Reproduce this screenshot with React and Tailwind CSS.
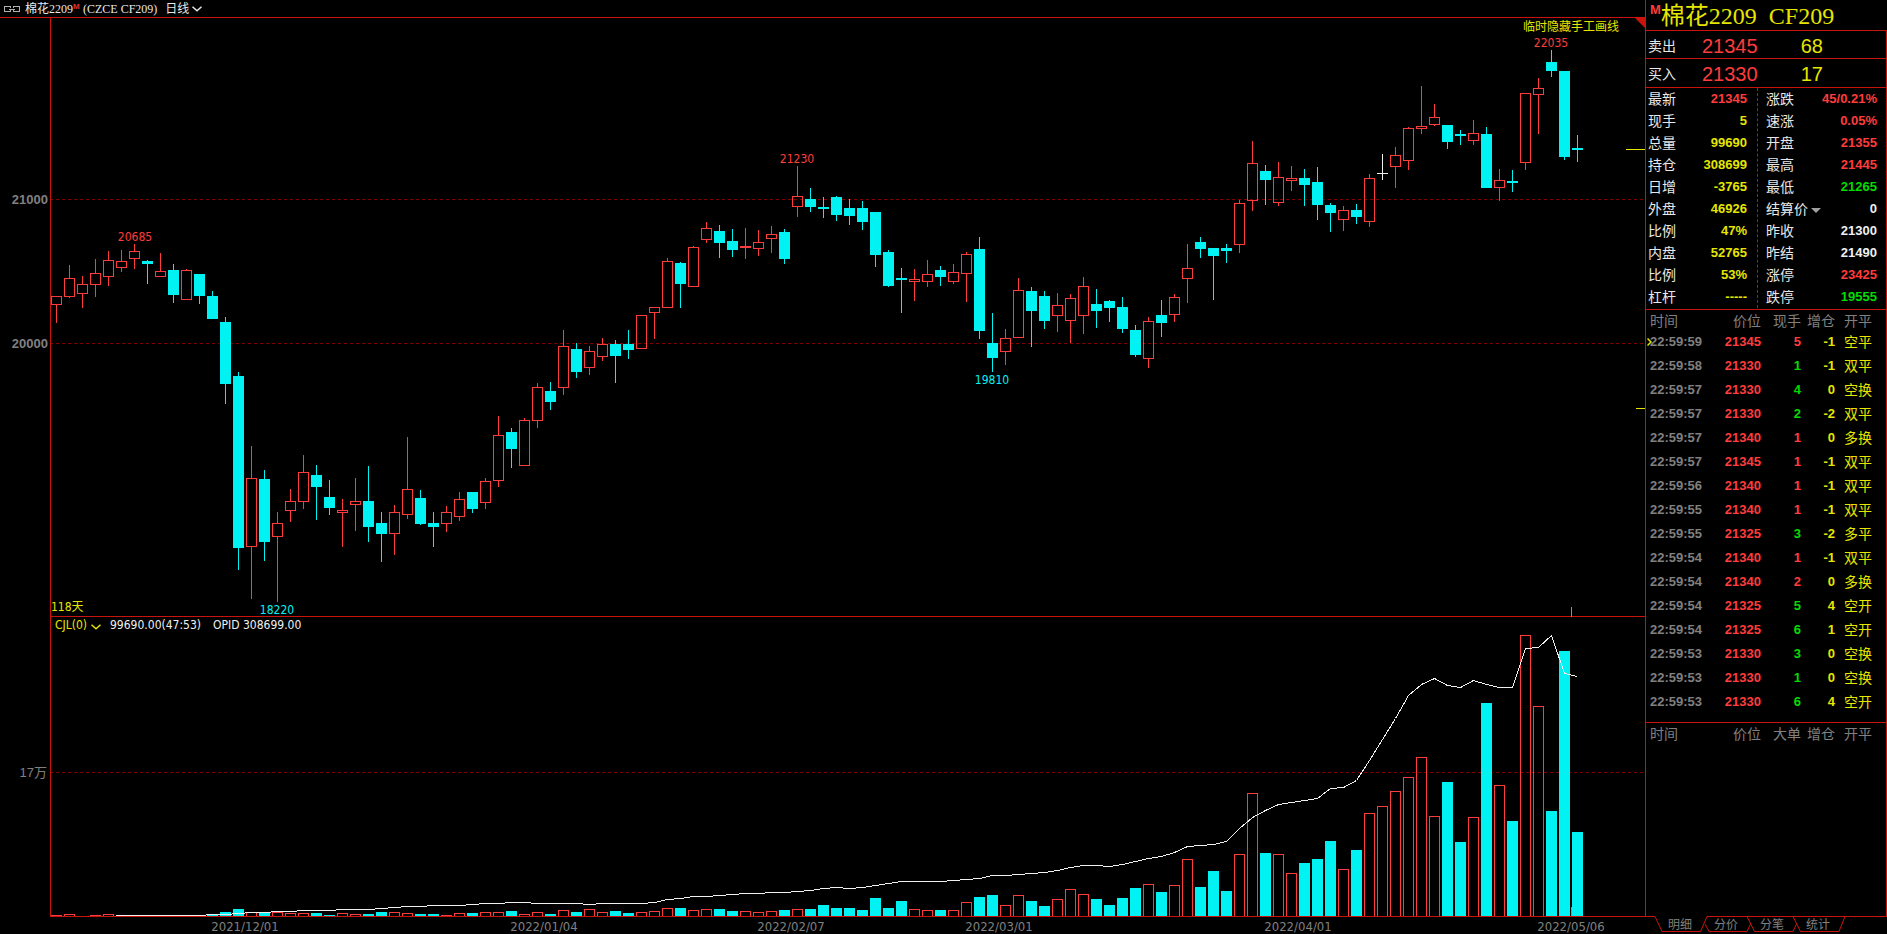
import React from 'react';

// Candles: [kind, high, bodyTop, bodyBottom, low, volumeTop, openInterest] in chart units.
// kind: r = rising (hollow red), c = falling (solid cyan), w = unchanged (white).
const CANDLES = [
  ['r', 296, 296, 305, 323, 915, null],
  ['r', 265, 278, 297, 298, 914, null],
  ['r', 276, 284, 294, 308, 916, null],
  ['r', 259, 273, 285, 297, 915, null],
  ['r', 251, 260, 277, 286, 914, null],
  ['r', 250, 261, 268, 272, 916, 915],
  ['r', 244, 251, 259, 269, 916, 915],
  ['c', 260, 261, 264, 284, 916, 915],
  ['r', 253, 271, 277, 277, 916, 915],
  ['c', 264, 270, 295, 303, 916, 915],
  ['r', 269, 270, 300, 300, 916, 915],
  ['c', 274, 274, 296, 304, 916, 915],
  ['c', 291, 296, 319, 319, 915, 914],
  ['c', 317, 322, 384, 404, 912, 914],
  ['c', 372, 376, 548, 570, 909, 913],
  ['r', 446, 478, 547, 599, 912, 912],
  ['c', 470, 479, 542, 561, 913, 912],
  ['r', 512, 523, 537, 602, 912, 911],
  ['r', 489, 501, 511, 522, 913, 911],
  ['r', 455, 472, 502, 509, 913, 910],
  ['c', 465, 475, 487, 520, 913, 910],
  ['c', 480, 497, 508, 515, 915, 910],
  ['r', 499, 510, 513, 547, 913, 909],
  ['r', 478, 501, 505, 531, 914, 909],
  ['c', 466, 501, 527, 542, 914, 909],
  ['c', 512, 523, 534, 562, 912, 908],
  ['r', 505, 512, 534, 555, 912, 907],
  ['r', 437, 489, 515, 519, 913, 906],
  ['c', 490, 498, 524, 525, 914, 906],
  ['c', 512, 523, 527, 547, 914, 905],
  ['r', 506, 512, 524, 532, 915, 905],
  ['r', 492, 499, 517, 521, 913, 905],
  ['c', 492, 492, 509, 513, 913, 904],
  ['r', 478, 481, 503, 509, 912, 903],
  ['r', 416, 435, 481, 487, 912, 903],
  ['c', 428, 432, 449, 468, 911, 902],
  ['r', 418, 420, 466, 466, 914, 902],
  ['r', 383, 387, 421, 428, 912, 903],
  ['c', 382, 391, 402, 410, 914, 903],
  ['r', 330, 346, 388, 395, 910, 903],
  ['c', 343, 349, 372, 378, 912, 903],
  ['r', 346, 351, 368, 375, 909, 904],
  ['r', 338, 344, 357, 361, 912, 903],
  ['c', 340, 344, 356, 383, 911, 903],
  ['c', 330, 344, 350, 359, 913, 903],
  ['r', 315, 315, 349, 349, 912, 903],
  ['r', 307, 307, 313, 339, 911, 902],
  ['r', 258, 261, 308, 308, 908, 899],
  ['c', 262, 263, 284, 308, 908, 898],
  ['r', 246, 247, 287, 287, 910, 896],
  ['r', 222, 228, 240, 243, 909, 896],
  ['c', 225, 231, 243, 258, 909, 895],
  ['c', 229, 241, 250, 257, 911, 894],
  ['r', 228, 246, 248, 259, 911, 893],
  ['r', 230, 242, 249, 256, 912, 893],
  ['r', 226, 234, 239, 253, 911, 892],
  ['c', 229, 232, 259, 264, 910, 892],
  ['r', 166, 196, 207, 217, 909, 891],
  ['c', 188, 199, 207, 212, 909, 890],
  ['c', 197, 207, 209, 218, 905, 888],
  ['c', 196, 197, 215, 221, 908, 887],
  ['c', 199, 208, 216, 225, 908, 888],
  ['c', 201, 208, 222, 230, 910, 887],
  ['c', 212, 212, 255, 267, 898, 885],
  ['c', 250, 252, 286, 287, 908, 883],
  ['c', 268, 278, 280, 313, 901, 881],
  ['r', 269, 279, 282, 301, 909, 881],
  ['r', 260, 274, 282, 287, 910, 881],
  ['c', 266, 270, 277, 286, 910, 881],
  ['r', 264, 272, 282, 284, 910, 880],
  ['r', 252, 254, 274, 302, 902, 879],
  ['c', 237, 249, 331, 339, 897, 878],
  ['c', 313, 343, 358, 372, 895, 875],
  ['r', 329, 338, 352, 365, 905, 875],
  ['r', 278, 290, 338, 338, 895, 874],
  ['c', 287, 291, 311, 347, 901, 873],
  ['c', 291, 296, 321, 329, 906, 872],
  ['r', 293, 305, 316, 332, 899, 870],
  ['r', 294, 298, 321, 343, 889, 867],
  ['r', 277, 286, 316, 334, 894, 865],
  ['c', 289, 304, 311, 328, 899, 865],
  ['c', 300, 301, 308, 322, 905, 866],
  ['c', 297, 307, 329, 333, 898, 864],
  ['c', 325, 330, 355, 357, 888, 861],
  ['r', 317, 321, 359, 368, 884, 858],
  ['c', 300, 315, 323, 337, 892, 856],
  ['r', 294, 297, 315, 322, 885, 852],
  ['r', 244, 268, 279, 303, 859, 846],
  ['c', 237, 242, 249, 258, 887, 845],
  ['c', 248, 248, 256, 300, 871, 844],
  ['c', 244, 248, 251, 263, 891, 841],
  ['r', 200, 203, 245, 253, 854, 828],
  ['r', 141, 163, 201, 211, 793, 817],
  ['c', 165, 171, 180, 205, 853, 810],
  ['r', 162, 177, 203, 206, 854, 804],
  ['r', 166, 178, 181, 191, 873, 802],
  ['c', 169, 178, 185, 206, 863, 800],
  ['c', 167, 182, 205, 220, 859, 798],
  ['c', 203, 205, 213, 232, 841, 788],
  ['r', 206, 210, 220, 231, 869, 787],
  ['c', 204, 210, 217, 224, 850, 780],
  ['r', 174, 178, 222, 227, 813, 760],
  ['w', 154, 173, 174, 180, 806, 739],
  ['r', 147, 155, 167, 188, 791, 718],
  ['r', 127, 128, 161, 170, 777, 695],
  ['r', 86, 126, 129, 134, 757, 684],
  ['r', 104, 117, 125, 126, 816, 678],
  ['c', 125, 125, 142, 149, 782, 685],
  ['c', 130, 134, 136, 145, 842, 687],
  ['r', 120, 133, 141, 145, 817, 680],
  ['c', 127, 134, 188, 188, 703, 684],
  ['r', 169, 180, 188, 201, 785, 687],
  ['c', 170, 181, 183, 192, 821, 687],
  ['r', 93, 93, 163, 170, 635, 648],
  ['r', 78, 88, 95, 134, 706, 647],
  ['c', 50, 62, 71, 77, 811, 635],
  ['c', 71, 71, 157, 160, 651, 673],
  ['c', 135, 148, 150, 162, 832, 676],
];

const INK = { r: '#ff3c3c', c: '#00f2f2', w: '#f0f0f0' };
const FRAME = '#c8140c';
const GRID = '#800000';
const BASE = 916;
const centre = (i) => 56 + 13 * i;

const PEAKS = [
  { text: '20685', x: 135, y: 241, fill: '#ff3c3c' },
  { text: '18220', x: 277, y: 614, fill: '#00f2f2' },
  { text: '21230', x: 797, y: 163, fill: '#ff3c3c' },
  { text: '19810', x: 992, y: 384, fill: '#00f2f2' },
  { text: '22035', x: 1551, y: 47, fill: '#ff3c3c' },
];

const DATES = [
  ['2021/12/01', 245],
  ['2022/01/04', 544],
  ['2022/02/07', 791],
  ['2022/03/01', 999],
  ['2022/04/01', 1298],
  ['2022/05/06', 1571],
];

const CJK = "font-['Liberation_Sans','Noto_Sans_CJK_SC',sans-serif]";
const TAHOMA = "font-['DejaVu_Sans_Condensed','Noto_Sans','Noto_Sans_CJK_SC',sans-serif]";

function Candle({ data, i }) {
  const [kind, high, top, bottom, low] = data;
  const x = centre(i);
  const color = INK[kind];
  return (
    <g>
      {top > high && <rect x={x} y={high} width="1" height={top - high} fill={color} />}
      {low > bottom && <rect x={x} y={bottom} width="1" height={low - bottom} fill={color} />}
      {kind === 'r' ? (
        <rect x={x - 4.5} y={top + 0.5} width="10" height={bottom - top - 1} fill="none" stroke={color} />
      ) : (
        <rect x={x - 5} y={top} width="11" height={bottom - top} fill={color} />
      )}
    </g>
  );
}

function VolumeBar({ data, i }) {
  const top = data[5];
  const x = centre(i);
  if (top >= BASE) return null;
  if (data[0] === 'c') return <rect x={x - 5} y={top} width="11" height={BASE - top} fill={INK.c} />;
  return <path d={`M${x - 4.5} ${BASE}V${top + 0.5}H${x + 5.5}V${BASE}`} fill="none" stroke={INK.r} />;
}

function PriceChart() {
  return (
    <svg viewBox="0 18 1645 599" className="block w-full" role="img" aria-label="日线">
      <g shapeRendering="crispEdges">
        <path d="M50 199.5H1643M50 343.5H1643" stroke={GRID} strokeDasharray="3 3" />
        <path d="M50.5 18V617M50 616.5H1645" stroke={FRAME} />
        {CANDLES.map((d, i) => (
          <Candle key={i} data={d} i={i} />
        ))}
        <path d="M1626 149.5H1645M1636 408.5H1645" stroke="#e6e600" />
        <path d="M1571.5 607V617" stroke="#909090" />
      </g>
      <path d="M1635 18H1645V28Z" fill={FRAME} />
      <g className="font-['Liberation_Sans',sans-serif] text-[13px] font-bold" fill="#808080" textAnchor="end">
        <text x="48" y="204">21000</text>
        <text x="48" y="348">20000</text>
      </g>
      <g className={`${TAHOMA} text-[12px]`}>
        {PEAKS.map((p) => (
          <text key={p.text} x={p.x} y={p.y} fill={p.fill} textAnchor="middle">
            {p.text}
          </text>
        ))}
        <text x="51" y="611" fill="#e6e600">118天</text>
      </g>
    </svg>
  );
}

function VolumeChart() {
  const line = CANDLES.map((d, i) => (d[6] === null ? null : `${centre(i)},${d[6]}`))
    .filter(Boolean)
    .join(' ');
  return (
    <svg viewBox="0 617 1645 317" className="block w-full" role="img" aria-label="CJL">
      <g shapeRendering="crispEdges">
        <path d="M50 772.5H1643" stroke={GRID} strokeDasharray="3 3" />
        {CANDLES.map((d, i) => (
          <VolumeBar key={i} data={d} i={i} />
        ))}
        <path d="M50.5 617V916M50 916.5H1645" stroke={FRAME} />
        <path d="M1571.5 907V916" stroke="#909090" />
        <polyline points={`115,915 ${line}`} transform="translate(0.5 0.5)" fill="none" stroke="#f0f0f0" />
      </g>
      <g fill="#808080">
        <text
          x="47"
          y="777"
          textAnchor="end"
          className="font-['Liberation_Sans','Noto_Sans_CJK_SC',sans-serif] text-[13px]"
        >
          17万
        </text>
        <g className={`${TAHOMA} text-[13px]`} textAnchor="middle">
          {DATES.map(([t, x]) => (
            <text key={t} x={x} y="931">
              {t}
            </text>
          ))}
        </g>
      </g>
    </svg>
  );
}

function Chevron({ className }) {
  return (
    <svg viewBox="0 0 10 6" className={`h-[6px] w-[10px] ${className}`} fill="none" stroke="currentColor" strokeWidth="1.5">
      <path d="M.5 .8 5 4.8 9.500 .8" />
    </svg>
  );
}

const RED = 'text-[#ff3c3c]';
const YEL = 'text-[#e6e600]';
const GRN = 'text-[#00dc00]';
const WHT = 'text-[#f0f0f0]';

const LEFT = [
  ['最新', '21345', RED],
  ['现手', '5', YEL],
  ['总量', '99690', YEL],
  ['持仓', '308699', YEL],
  ['日增', '-3765', YEL],
  ['外盘', '46926', YEL],
  ['比例', '47%', YEL],
  ['内盘', '52765', YEL],
  ['比例', '53%', YEL],
  ['杠杆', '-----', YEL],
];

const RIGHT = [
  ['涨跌', '45/0.21%', RED],
  ['速涨', '0.05%', RED],
  ['开盘', '21355', RED],
  ['最高', '21445', RED],
  ['最低', '21265', GRN],
  ['结算价', '0', WHT],
  ['昨收', '21300', WHT],
  ['昨结', '21490', WHT],
  ['涨停', '23425', RED],
  ['跌停', '19555', GRN],
];

const TICKS = [
  ['22:59:59', '21345', '5', RED, '-1', '空平'],
  ['22:59:58', '21330', '1', GRN, '-1', '双平'],
  ['22:59:57', '21330', '4', GRN, '0', '空换'],
  ['22:59:57', '21330', '2', GRN, '-2', '双平'],
  ['22:59:57', '21340', '1', RED, '0', '多换'],
  ['22:59:57', '21345', '1', RED, '-1', '双平'],
  ['22:59:56', '21340', '1', RED, '-1', '双平'],
  ['22:59:55', '21340', '1', RED, '-1', '双平'],
  ['22:59:55', '21325', '3', GRN, '-2', '多平'],
  ['22:59:54', '21340', '1', RED, '-1', '双平'],
  ['22:59:54', '21340', '2', RED, '0', '多换'],
  ['22:59:54', '21325', '5', GRN, '4', '空开'],
  ['22:59:54', '21325', '6', GRN, '1', '空开'],
  ['22:59:53', '21330', '3', GRN, '0', '空换'],
  ['22:59:53', '21330', '1', GRN, '0', '空换'],
  ['22:59:53', '21330', '6', GRN, '4', '空开'],
];

function QuoteList({ rows, className }) {
  return (
    <dl className={className}>
      {rows.map(([label, value, color], i) => (
        <div key={i} className="flex h-[22px] items-center justify-between">
          <dt className="flex items-center text-[14px] leading-[22px] text-[#e8e8e8]">
            {label === '结算价' ? (
              <button className="flex items-center gap-[3px]">
                {label}
                <svg viewBox="0 0 10 5" className="mt-[3px] h-[5px] w-[10px]" fill="#a0a0a0">
                  <path d="M0 0H10L5 5Z" />
                </svg>
              </button>
            ) : (
              label
            )}
          </dt>
          <dd className={`text-[13px] leading-[20px] font-bold ${color}`}>{value}</dd>
        </div>
      ))}
    </dl>
  );
}

function TickTable({ heads, rows }) {
  return (
    <table className="w-full table-fixed border-collapse text-right text-[13px] font-bold">
      <colgroup>
        <col className="w-[64px]" />
        <col className="w-[51px]" />
        <col className="w-[40px]" />
        <col className="w-[34px]" />
        <col />
      </colgroup>
      <thead>
        <tr className="h-5 text-[14px] leading-[18px] text-[#808080]">
          {heads.map((h, i) => (
            <th
              key={h}
              className={`p-0 pt-[2px] font-normal whitespace-nowrap ${i === 0 ? 'pl-1 text-left' : ''} ${i === 4 ? 'pl-[9px] text-left' : ''}`}
            >
              {h}
            </th>
          ))}
        </tr>
      </thead>
      <tbody>
        {rows.map(([time, price, hand, handColor, pos, kind], i) => (
          <tr key={i} className="h-6 leading-[22px]">
            <td className="relative p-0 pl-1 text-left text-[#808080]">
              {i === 0 && (
                <svg viewBox="0 0 5 8" className={`absolute top-[8px] left-[1px] h-[8px] w-[5px] ${YEL}`} fill="none" stroke="currentColor" strokeWidth="1.5">
                  <path d="M.5 .5 4 4 .5 7.500" />
                </svg>
              )}
              {time}
            </td>
            <td className={`p-0 ${RED}`}>{price}</td>
            <td className={`p-0 ${handColor}`}>{hand}</td>
            <td className={`p-0 ${YEL}`}>{pos}</td>
            <td className={`p-0 pl-[9px] text-left text-[14px] font-normal ${YEL}`}>{kind}</td>
          </tr>
        ))}
      </tbody>
    </table>
  );
}

function BookRow({ label, price, size, className }) {
  return (
    <div className={`flex items-center border-r border-b border-[#c8140c] pt-[2px] pl-[2px] ${className}`}>
      <span className="w-[54px] text-[14px] leading-[20px] text-[#e8e8e8]">{label}</span>
      <span className={`w-[56px] text-[20px] leading-[24px] ${RED}`}>{price}</span>
      <span className={`w-[65px] text-right text-[20px] leading-[24px] ${YEL}`}>{size}</span>
    </div>
  );
}

function SidePanel() {
  return (
    <aside className={`flex w-[242px] shrink-0 flex-col ${CJK}`}>
      <div className="flex flex-1 flex-col border-l border-[#c8140c]">
        <h1 className={`flex h-[31px] items-center border-b border-[#c8140c] pt-[2px] pl-1 ${YEL}`}>
          <span className="mb-3 text-[13px] leading-[16px] font-bold text-[#ff3c3c]">M</span>
          <span className="font-['Liberation_Serif','Noto_Sans_CJK_SC',serif] text-[24px] leading-[28px] whitespace-pre">
            棉花2209  CF209
          </span>
        </h1>
        <BookRow label="卖出" price="21345" size="68" className="h-[28px]" />
        <BookRow label="买入" price="21330" size="17" className="h-[29px]" />
        <div className="flex border-r border-b border-[#c8140c] pb-px">
          <QuoteList rows={LEFT} className="w-[112px] border-r border-dashed border-[#c8140c] pr-[10px] pl-[2px]" />
          <QuoteList rows={RIGHT} className="flex-1 pr-[9px] pl-[8px]" />
        </div>
        <div className="border-r border-b border-[#c8140c] pb-2">
          <TickTable heads={['时间', '价位', '现手', '增仓', '开平']} rows={TICKS} />
        </div>
        <div className="flex-1 border-r border-[#c8140c]">
          <TickTable heads={['时间', '价位', '大单', '增仓', '开平']} rows={[]} />
        </div>
      </div>
      <nav className="relative flex h-[18px] pl-[12px] text-[12px] leading-[18px] text-[#808080]">
        <svg viewBox="0 0 242 18" className="pointer-events-none absolute inset-0 h-[18px] w-[242px]" fill="none" stroke={FRAME}>
          <path d="M0 .5H10L17 15.500H55.500L62 .5H242" />
          <path d="M60 8 64 15.500H102L105.500 8" />
          <path d="M102 .5 109.500 15.500H148L151.500 8" />
          <path d="M148 .5 155.500 15.500H194L200 .5" />
        </svg>
        {['明细', '分价', '分笔', '统计'].map((t) => (
          <button key={t} className="w-[46px] text-center">
            {t}
          </button>
        ))}
      </nav>
    </aside>
  );
}

export default function App() {
  return (
    <div className="flex w-full overflow-hidden bg-black">
      <main className="min-w-0 flex-1">
        <header className="flex h-[18px] items-center border-b border-[#c8140c] pl-1 font-['Liberation_Serif','Noto_Sans_CJK_SC',serif] text-[12px] leading-[16px] whitespace-pre text-[#e8e8e8]">
          <svg viewBox="0 0 16 6" className="mr-[5px] h-[6px] w-[16px]" fill="none" stroke="#b0b0b0" shapeRendering="crispEdges">
            <path d="M6.500 2V.5H.5V5.500H6.500V4M9.500 2V.5H15.500V5.500H9.500V4M5 3H11" />
          </svg>
          <span>棉花2209</span>
          <span className="mb-1 w-[10px] font-['Liberation_Sans',sans-serif] text-[8px] font-bold text-[#e03030]">M</span>
          <span>(CZCE CF209)</span>
          <button className="ml-2 flex items-center gap-[3px]">
            日线
            <Chevron className="" />
          </button>
        </header>
        <section className="relative">
          <PriceChart />
          <button className={`absolute top-0 right-[26px] text-[12px] leading-[18px] ${CJK} ${YEL}`}>临时隐藏手工画线</button>
        </section>
        <section className="relative">
          <VolumeChart />
          <div className={`absolute top-0 left-[55px] flex text-[12px] leading-[16px] text-[#f0f0f0] ${TAHOMA}`}>
            <button className={`flex w-[55px] items-center gap-1 ${YEL}`}>
              CJL(0)
              <Chevron className="mt-[3px]" />
            </button>
            <span className="w-[103px]">99690.00(47:53)</span>
            <span>OPID 308699.00</span>
          </div>
        </section>
      </main>
      <SidePanel />
    </div>
  );
}
